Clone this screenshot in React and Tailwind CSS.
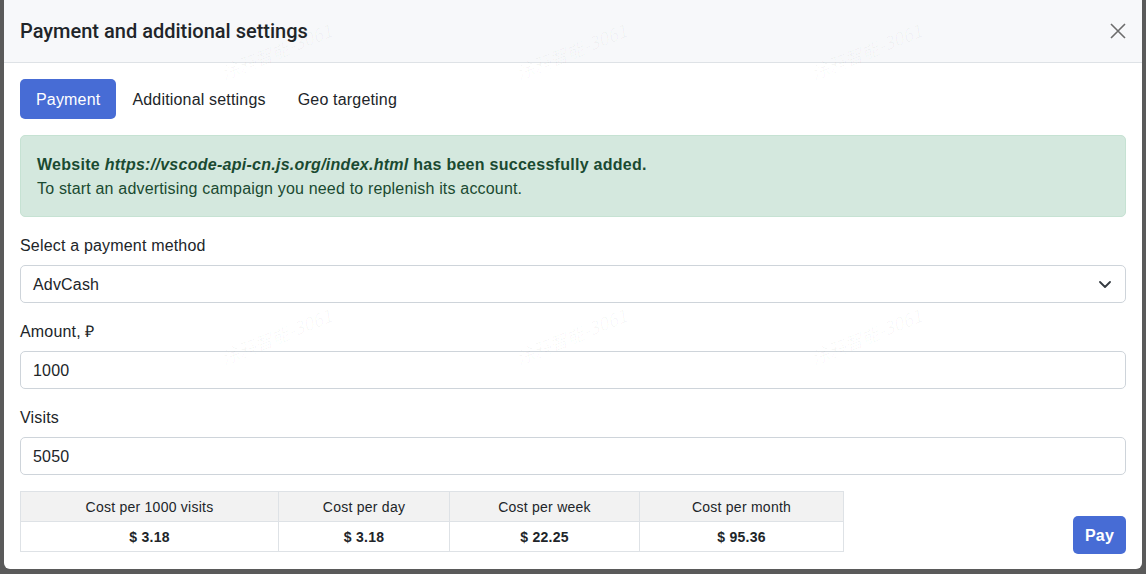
import React from "react";

const marks = [
  "left-[217px] top-[37px]",
  "left-[512px] top-[37px]",
  "left-[807px] top-[37px]",
  "left-[217px] top-[322px]",
  "left-[512px] top-[322px]",
  "left-[807px] top-[322px]",
];

const costs = [
  { label: "Cost per 1000 visits", value: "$ 3.18", w: "w-[258px]" },
  { label: "Cost per day", value: "$ 3.18", w: "w-[171px]" },
  { label: "Cost per week", value: "$ 22.25", w: "w-[190px]" },
  { label: "Cost per month", value: "$ 95.36", w: "w-[204px]" },
];

const Field = ({ label, children }) => (
  <div className="mt-4">
    <div className="mb-2 pt-[1px] leading-[23px]">{label}</div>
    {children}
  </div>
);

const App = () => {
  return (
    <div
      className="relative h-[574px] w-full overflow-hidden bg-[#5a5a5a] px-[4px] text-[16px] tracking-[0.18px] text-[#212529]"
      style={{ fontFamily: '"Liberation Sans", Arial, sans-serif' }}
    >
      <div className="h-[569px] overflow-hidden rounded-b-[6px] bg-white">
        {/* header */}
        <div className="flex h-[63px] items-center justify-between border-b border-[#dee2e6] bg-[#f7f8fa] pl-4 pr-[16px]">
          <h2 className="text-[20px] font-medium leading-[30px] tracking-normal text-[#212529] [font-family:Roboto,'Liberation_Sans',sans-serif]">
            Payment and additional settings
          </h2>
          <svg width="16" height="16" viewBox="0 0 16 16" className="text-[#6c6c6c]">
            <path d="M1 1L15 15M15 1L1 15" stroke="currentColor" strokeWidth="1.6" fill="none" />
          </svg>
        </div>

        {/* body */}
        <div className="p-4">
          <div className="mb-4 flex">
            <button className="rounded-[5px] bg-[#476cd5] px-4 pb-[7px] pt-[9px] leading-6 text-white">Payment</button>
            <button className="px-4 pb-[7px] pt-[9px] leading-6">Additional settings</button>
            <button className="px-4 pb-[7px] pt-[9px] leading-6">Geo targeting</button>
          </div>

          <div className="rounded-[5px] border border-[#c6e2d3] bg-[#d4e8de] px-4 pb-[15px] pt-[17px] leading-6 text-[#1a4a31]">
            <div className="font-bold tracking-[0.27px]">
              Website <i>https://vscode-api-cn.js.org/index.html</i> has been successfully added.
            </div>
            <div>To start an advertising campaign you need to replenish its account.</div>
          </div>

          <Field label="Select a payment method">
            <div className="flex h-[38px] items-center justify-between rounded-[5px] border border-[#ced4da] pl-3 pr-[14px]">
              <span className="pt-[2px]">AdvCash</span>
              <svg width="12" height="7" viewBox="0 0 12 7" className="text-[#343a40]">
                <path d="M1 1L6 6L11 1" stroke="currentColor" strokeWidth="1.8" fill="none" strokeLinecap="round" strokeLinejoin="round" />
              </svg>
            </div>
          </Field>

          <Field label="Amount, ₽">
            <div className="flex h-[38px] items-center rounded-[5px] border border-[#ced4da] px-3 pt-[2px]">1000</div>
          </Field>

          <Field label="Visits">
            <div className="flex h-[38px] items-center rounded-[5px] border border-[#ced4da] px-3 pt-[2px]">5050</div>
          </Field>

          <div className="mt-4 flex items-end justify-between">
            <table className="mb-[2px] border-collapse text-[14px] tracking-[0.25px]">
              <thead>
                <tr className="bg-[#f2f2f2]">
                  {costs.map((c) => (
                    <th key={c.label} className={`${c.w} h-[30px] border border-[#dee2e6] pt-[2px] text-center font-normal`}>
                      {c.label}
                    </th>
                  ))}
                </tr>
              </thead>
              <tbody>
                <tr>
                  {costs.map((c) => (
                    <td key={c.label} className="h-[30px] border border-[#dee2e6] pt-[2px] text-center font-bold">
                      {c.value}
                    </td>
                  ))}
                </tr>
              </tbody>
            </table>
            <button className="h-[38px] rounded-[5px] bg-[#476cd5] px-3 pt-[1px] font-bold text-white">Pay</button>
          </div>
        </div>
      </div>

      {/* watermark */}
      <div className="pointer-events-none absolute inset-0">
        {marks.map((m) => (
          <span
            key={m}
            className={`absolute ${m} w-[122px] -rotate-[22deg] whitespace-nowrap text-[18px] italic tracking-normal text-black/[0.03] [font-family:'Noto_Sans_CJK_SC',sans-serif]`}
          >
            涂鸦智能-3061
          </span>
        ))}
      </div>
    </div>
  );
};

export default App;
